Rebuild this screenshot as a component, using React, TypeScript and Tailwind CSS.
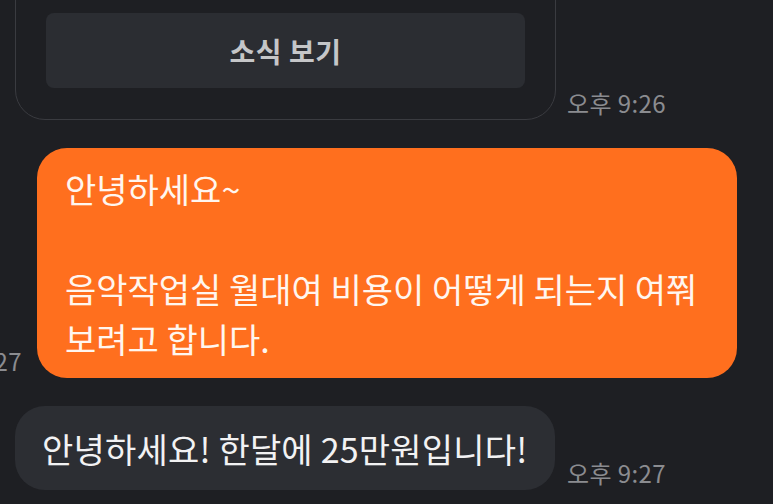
import React from "react";

const font = { fontFamily: '"Noto Sans CJK KR", "Noto Sans", sans-serif' };

function Time({ t }: { t: string }) {
  return (
    <span className="shrink-0 whitespace-nowrap text-[24px] leading-[24px] mb-[5px] text-[#8b8c90] tracking-[0.4px]">
      {t}
    </span>
  );
}

export default function App() {
  return (
    <div
      className="w-[773px] h-[504px] overflow-hidden bg-[#1e1f23] flex flex-col"
      style={font}
    >
      <div className="flex items-end gap-[11px] pl-[15px]">
        <div className="w-[541px] shrink-0 mt-[-40px] pt-[52px] pb-[31px] px-[30px] border border-[#3a3b40] rounded-[30px]">
          <div className="h-[75px] rounded-[8px] bg-[#2b2d32] flex items-center justify-center text-[28px] font-semibold text-[#c5c6c8] tracking-[0.5px]">
            소식 보기
          </div>
        </div>
        <Time t="오후 9:26" />
      </div>

      <div className="flex items-end justify-end gap-[15px] pr-[36px] mt-[28px]">
        <Time t="오후 9:27" />
        <div className="w-[700px] shrink-0 h-[230px] rounded-[30px] bg-[#ff6f1e] pt-[16px] pl-[28px] text-[34px] leading-[50px] text-[#fff6ef] whitespace-nowrap">
          안녕하세요~
          <br />
          <br />
          음악작업실 월대여 비용이 어떻게 되는지 여쭤
          <br />
          보려고 합니다.
        </div>
      </div>

      <div className="flex items-end gap-[12px] pl-[15px] mt-[28px]">
        <div className="w-[540px] shrink-0 h-[84px] rounded-[30px] bg-[#2c2e33] flex items-center pl-[27px] text-[34px] text-[#f2f2f3] whitespace-nowrap tracking-[0.2px]">
          안녕하세요! 한달에 25만원입니다!
        </div>
        <Time t="오후 9:27" />
      </div>
    </div>
  );
}
